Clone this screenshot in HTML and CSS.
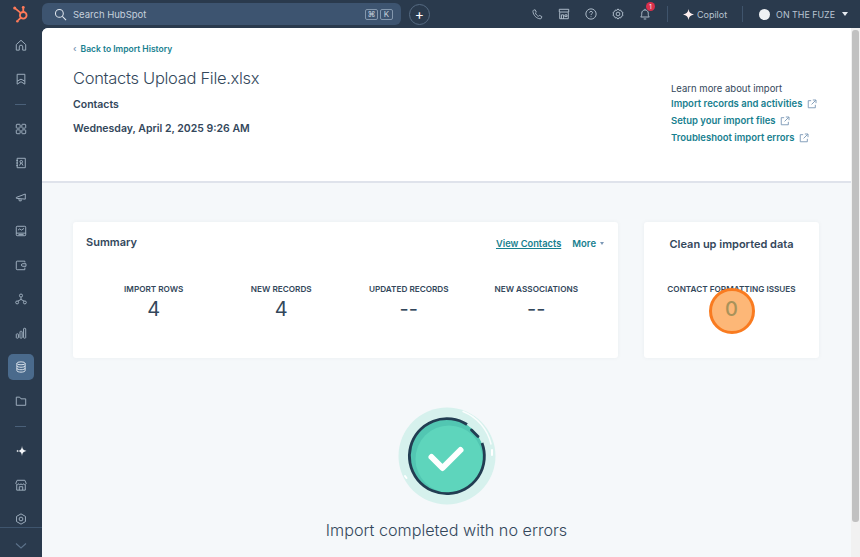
FILE: index.html
```html
<!DOCTYPE html>
<html lang="en">
<head>
<meta charset="utf-8">
<title>Import summary</title>
<link rel="stylesheet" href="styles.css">
</head>
<body>
<header class="topbar">
  <div class="logo">
    <svg viewBox="0 0 20 20" width="18" height="18"><g fill="none" stroke="#ff7a59" stroke-width="2"><circle cx="12.5" cy="11.5" r="3.7"/><path d="M12.5 7.5V3.5M9.6 8.7 3.5 3.8M9.7 14.2l-3 3"/></g><circle cx="12.5" cy="2.8" r="1.6" fill="#ff7a59"/><circle cx="3" cy="3.3" r="1.7" fill="#ff7a59"/><circle cx="6" cy="18" r="1.4" fill="#ff7a59"/></svg>
  </div>
  <div class="search">
    <svg class="search-icon" viewBox="0 0 14 14" width="13" height="13"><circle cx="5.8" cy="5.8" r="4.2"/><path d="m9 9 4 4"/></svg>
    <span class="search-text">Search HubSpot</span>
    <span class="key">⌘</span><span class="key">K</span>
  </div>
  <button class="plus">+</button>
  <div class="spacer"></div>
  <div class="tool"><svg viewBox="0 0 14 14" width="11" height="11"><path d="M2 1.5 4 1l1.500 3-1.200 1c.6 1.800 2.200 3.500 4 4.300l1.200-1.200 3 1.500-.5 2c-.3.800-1 1-1.800.9C5.500 12 1.800 8 1.200 3.300 1.100 2.500 1.300 1.800 2 1.500Z"/></svg></div>
  <div class="tool"><svg viewBox="0 0 14 14" width="12" height="12"><path d="M2 5v7.500h10V5M1.500 1.500h11v3.200h-11ZM4 12.500V8h2.500v4.500M8 8h2.500v2H8Z"/></svg></div>
  <div class="tool"><svg viewBox="0 0 14 14" width="12" height="12"><circle cx="7" cy="7" r="6"/><path d="M5.300 5.400C5.400 3.400 8.800 3.500 8.800 5.400c0 1.300-1.800 1.400-1.800 2.800M7 9.700v1"/></svg></div>
  <div class="tool"><svg viewBox="0 0 14 14" width="12" height="12"><path d="m7 1 1.200 1.700 2-.3.800 1.900 1.800.9-.6 1.800.6 1.800-1.800.9-.8 1.900-2-.3L7 13l-1.200-1.700-2 .3-.8-1.900-1.800-.9L1.800 7l-.6-1.800L3 4.300l.8-1.900 2 .3Z"/><circle cx="7" cy="7" r="2.200"/></svg></div>
  <div class="tool bell"><svg viewBox="0 0 14 14" width="12" height="12"><path d="M2 10.500c1.200-1 1.200-2.500 1.200-4.500C3.200 3.800 5 2.300 7 2.300s3.800 1.500 3.800 3.700c0 2 0 3.500 1.200 4.500ZM5.500 12.800h3M7 1v1.200"/></svg><span class="badge">1</span></div>
  <span class="bar-divider first"></span>
  <div class="copilot">
    <svg viewBox="0 0 12 12" width="11" height="11"><path class="solid" d="M6 0c.5 3.500 2.200 5.400 6 6-3.800.6-5.500 2.500-6 6-.5-3.500-2.200-5.400-6-6 3.800-.6 5.500-2.500 6-6Z"/></svg>
    <span>Copilot</span>
  </div>
  <span class="bar-divider"></span>
  <div class="account">
    <span class="avatar"></span>
    <span>ON THE FUZE</span>
    <span class="caret"></span>
  </div>
</header>
<div class="shell">
  <nav class="sidebar">
    <div class="nav-items">
      <a class="nav"><svg viewBox="0 0 14 14"><path d="M1.500 6.500 7 1.500l5.500 5v6.500H9V9.200a2 2 0 0 0-4 0V13H1.500Z"/></svg></a>
      <a class="nav"><svg viewBox="0 0 14 14"><path d="M2.500 1.500h9V13L7 10.200 2.500 13ZM2.500 9.500 7 7.200l4.500 2.300"/></svg></a>
      <span class="nav-divider"></span>
      <a class="nav"><svg viewBox="0 0 14 14"><rect x="1.500" y="1.500" width="4.500" height="4.500" rx=".8"/><rect x="8" y="1.500" width="4.500" height="4.500" rx=".8"/><rect x="1.500" y="8" width="4.500" height="4.500" rx=".8"/><rect x="8" y="8" width="4.500" height="4.500" rx=".8"/></svg></a>
      <a class="nav"><svg viewBox="0 0 14 14"><path d="M2.500 1.500h9.500v11H2.500ZM1.500 4h2M1.500 7h2M1.500 10h2"/><circle cx="7.300" cy="5.500" r="1.500"/><path d="m5.300 10 1.500-3M9.300 10l-1.500-3"/></svg></a>
      <a class="nav"><svg viewBox="0 0 14 14"><path d="M1.500 7.500 12 3.500v6L1.500 8.500ZM4.500 9l.5 2.500h2.300L7 9.500"/></svg></a>
      <a class="nav"><svg viewBox="0 0 14 14"><rect x="1.500" y="1.500" width="11" height="11" rx="1"/><path d="M1.500 9.500h11M4 11.200h6M3.500 6l2-1.500 2 1.500 3-2"/></svg></a>
      <a class="nav"><svg viewBox="0 0 14 14"><path d="M11.500 4V2.500h-9a1 1 0 0 0-1 1v8a1 1 0 0 0 1 1h9V10"/><path d="M9 5.500h3.800v3H9a1.500 1.500 0 0 1 0-3Z"/></svg></a>
      <a class="nav"><svg viewBox="0 0 14 14"><circle cx="7" cy="3" r="1.800"/><circle cx="2.500" cy="11" r="1.700"/><circle cx="11.500" cy="11" r="1.700"/><path d="M7 5v2.500M3.300 9.500 7 7.500l3.700 2"/></svg></a>
      <a class="nav"><svg viewBox="0 0 14 14"><rect x="1.500" y="8" width="2.500" height="5" rx=".8"/><rect x="5.800" y="5" width="2.500" height="8" rx=".8"/><rect x="10" y="1.500" width="2.500" height="11.500" rx=".8"/></svg></a>
      <a class="nav active"><svg viewBox="0 0 14 14"><ellipse cx="7" cy="2.700" rx="4.800" ry="1.700"/><path d="M2.200 2.700v8.600c0 .9 2.200 1.700 4.800 1.700s4.800-.8 4.800-1.700V2.700M2.200 5.600c0 .9 2.200 1.700 4.800 1.700s4.800-.8 4.800-1.700M2.200 8.500c0 .9 2.200 1.700 4.800 1.700s4.800-.8 4.800-1.700"/></svg></a>
      <a class="nav"><svg viewBox="0 0 14 14"><path d="M1.500 2.500h4l1.500 2h5.500v7.500h-11Z"/></svg></a>
      <span class="nav-divider"></span>
      <a class="nav bright"><svg viewBox="0 0 14 14"><path class="solid" d="M8.200 1c.3 3.500 1.300 5.300 5.300 6-4 .7-5 2.500-5.300 6-.3-3.500-1.300-5.300-4.200-6 2.900-.7 3.900-2.500 4.200-6ZM3 5.500c.1 .8.600 1.300 1.500 1.500-.9.200-1.400.7-1.500 1.500-.1-.8-.6-1.300-1.500-1.500.9-.2 1.400-.7 1.500-1.500Z"/></svg></a>
      <a class="nav"><svg viewBox="0 0 14 14"><path d="M2.500 1.500h9l1.500 3.500c0 2-3 2-3 .5 0 1.500-3 1.500-3 0 0 1.500-3 1.500-3 0 0 1.500-3 1.500-3-.5ZM2 7v6h10V7M5 13V9h4v4"/></svg></a>
      <a class="nav"><svg viewBox="0 0 14 14"><path d="m7 1 5.200 3v6L7 13l-5.200-3V4Z"/><circle cx="7" cy="7" r="2.200"/></svg></a>
    </div>
    <div class="nav-foot"><svg viewBox="0 0 12 6" width="12" height="6"><path d="m1 .5 5 4.500 5-4.500"/></svg></div>
  </nav>
  <main class="main">
    <section class="head">
      <div class="head-left">
        <a class="back"><span class="chev">‹</span>Back to Import History</a>
        <h1>Contacts Upload File.xlsx</h1>
        <div class="sub">Contacts</div>
        <div class="sub date">Wednesday, April 2, 2025 9:26 AM</div>
      </div>
      <div class="head-right">
        <div class="learn">Learn more about import</div>
        <a class="ext">Import records and activities <svg viewBox="0 0 12 12" width="10" height="10"><path d="M5 2H1.500v8.500H10V7M7 1.200h3.800V5M10.500 1.500 5.500 6.500"/></svg></a>
        <a class="ext">Setup your import files <svg viewBox="0 0 12 12" width="10" height="10"><path d="M5 2H1.500v8.500H10V7M7 1.200h3.800V5M10.500 1.500 5.500 6.500"/></svg></a>
        <a class="ext">Troubleshoot import errors <svg viewBox="0 0 12 12" width="10" height="10"><path d="M5 2H1.500v8.500H10V7M7 1.200h3.800V5M10.500 1.500 5.500 6.500"/></svg></a>
      </div>
    </section>
    <section class="cards">
      <div class="card summary">
        <div class="card-head">
          <h2>Summary</h2>
          <a class="view">View Contacts</a>
          <a class="more">More<span class="more-caret"></span></a>
        </div>
        <div class="stats">
          <div class="stat"><div class="label">IMPORT ROWS</div><div class="value">4</div></div>
          <div class="stat"><div class="label">NEW RECORDS</div><div class="value">4</div></div>
          <div class="stat"><div class="label">UPDATED RECORDS</div><div class="value">--</div></div>
          <div class="stat"><div class="label">NEW ASSOCIATIONS</div><div class="value">--</div></div>
        </div>
      </div>
      <div class="card cleanup">
        <h2>Clean up imported data</h2>
        <div class="stat">
          <div class="label">CONTACT FORMATTING ISSUES</div>
          <div class="value zero">0<span class="spot"></span></div>
        </div>
      </div>
    </section>
    <section class="done">
      <svg class="done-art" viewBox="0 0 100 100" width="100" height="100">
        <circle cx="50" cy="50" r="48.500" fill="#d6f1ed"/>
        <path d="M66 5.500A46 46 0 0 1 94 38" fill="none" stroke="#fff" stroke-width="1.500" stroke-linecap="round" opacity=".85"/>
        <path d="M95 44v5M8 70l1.500 2" fill="none" stroke="#fff" stroke-width="2" stroke-linecap="round"/>
        <circle cx="50" cy="50" r="37" fill="#52c6b2"/>
        <circle cx="52" cy="53" r="33.500" fill="#5ed5bc"/>
        <path d="M70 18.500A37.500 37.500 0 1 0 85 37" fill="none" stroke="#223d52" stroke-width="2.800"/>
        <path d="M74.500 24 81 30.500" fill="none" stroke="#223d52" stroke-width="2.800" stroke-linecap="round"/>
        <path d="m34.500 51 11 11 18-18" fill="none" stroke="#fff" stroke-width="6" stroke-linecap="round" stroke-linejoin="round"/>
      </svg>
      <p>Import completed with no errors</p>
    </section>
  </main>
  <div class="scrollbar"><span class="thumb"></span></div>
</div>
</body>
</html>
```

FILE: styles.css
```css
* { box-sizing: border-box; }
html, body { margin: 0; height: 100%; overflow: hidden; }
body {
  font-family: Inter, "Noto Sans", sans-serif;
  color: #33475b;
  background: #2a3a4d;
  display: flex;
  flex-direction: column;
}
svg { fill: none; stroke: currentColor; stroke-width: 1.100; }
svg .solid { fill: currentColor; stroke: none; }
h1, h2, p { margin: 0; font-weight: 400; }

.topbar {
  flex: 0 0 28px;
  display: flex;
  align-items: center;
  padding-right: 12px;
  color: #cfd8e3;
  font-size: 9.500px;
}
.logo { width: 42px; display: flex; justify-content: center; }
.logo svg { stroke: none; }
.search {
  width: 359px;
  height: 22px;
  background: #3d5470;
  border-radius: 6px;
  display: flex;
  align-items: center;
  padding: 0 8px 0 12px;
  gap: 2px;
  color: #c6d1dd;
}
.search-icon { color: #e3e9f0; margin-right: 4px; }
.search-text { flex: 1; font-size: 9.500px; }
.key {
  width: 13px;
  height: 11px;
  border: 1px solid #8397ad;
  border-radius: 2px;
  font-size: 8px;
  line-height: 9px;
  text-align: center;
}
.plus {
  width: 21px;
  height: 21px;
  margin-left: 8px;
  border: 1px solid #566b83;
  border-radius: 50%;
  background: none;
  color: #fff;
  font: 14px/15px Inter, sans-serif;
  padding: 0 0 2px;
}
.spacer { flex: 1; }
.tool { width: 27px; display: flex; justify-content: center; position: relative; color: #b4c1cf; }
.badge {
  position: absolute;
  top: -6px;
  left: 14px;
  width: 9px;
  height: 9px;
  border-radius: 50%;
  background: #d9304c;
  color: #fff;
  font-size: 6px;
  line-height: 9px;
  text-align: center;
}
.bar-divider { width: 1px; height: 16px; background: #3f546c; margin-left: 15px; }
.bar-divider.first { margin-left: 8px; }
.copilot { display: flex; align-items: center; gap: 3px; margin-left: 15px; font-size: 9px; color: #b9c5d2; }
.copilot svg { color: #fdeeee; }
.account { display: flex; align-items: center; margin-left: 16px; font-size: 8.900px; color: #b9c5d2; }
.avatar { width: 11px; height: 11px; border-radius: 50%; background: #eef1f4; margin-right: 6px; }
.caret {
  margin-left: 7px;
  border: 3.500px solid transparent;
  border-top: 4px solid #e6ebf1;
  border-bottom: 0;
}

.shell { flex: 1; display: flex; min-height: 0; }
.sidebar { width: 42px; display: flex; flex-direction: column; color: #a3b2c2; }
.nav-items { flex: 1; min-height: 0; overflow: hidden; display: flex; flex-direction: column; }
.nav { flex: 0 0 34px; display: flex; align-items: center; justify-content: center; }
.nav svg { width: 12px; height: 12px; }
.nav.active { background: #4a6a8c; border-radius: 5px; margin: 4px 8px 4px 8px; flex-basis: 26px; color: #dfe7ef; }
.nav.bright { color: #f4f6f9; }
.nav-divider { flex: 0 0 16px; position: relative; }
.nav-divider::after { content: ""; position: absolute; left: 15px; right: 16px; top: 8px; height: 1px; background: #4a6079; }
.nav-foot { flex: 0 0 30px; border-top: 1px solid #3f556e; display: flex; align-items: center; justify-content: center; padding-top: 7px; color: #5c728a; }

.main { flex: 1; min-width: 0; background: #f5f8fa; border-top-left-radius: 6px; overflow: hidden; }
.head {
  height: 155px;
  background: #fff;
  border-bottom: 2px solid #dfe3eb;
  display: flex;
  justify-content: space-between;
  padding: 15px 34px 0 31px;
}
.back { display: block; color: #17808f; font-size: 8.500px; font-weight: 600; line-height: 12px; }
.chev { color: #7c98b6; margin-right: 4px; }
h1 { font-size: 16.500px; letter-spacing: -.3px; font-weight: 300; line-height: 24px; margin-top: 11px; }
.sub { font-size: 10.500px; font-weight: 600; line-height: 14px; margin-top: 8px; }
.sub.date { margin-top: 10px; }
.head-right { width: 146px; padding-top: 39px; }
.learn { font-size: 9.500px; line-height: 13px; margin-bottom: -2px; }
.ext { display: block; color: #17808f; font-size: 9.500px; font-weight: 600; line-height: 13px; margin-top: 4px; white-space: nowrap; }
.ext svg { color: #7c98b6; vertical-align: -1.500px; margin-left: 2px; }

.cards { display: flex; gap: 26px; padding: 39px 32px 0 31px; }
.card { background: #fff; border-radius: 3px; height: 136px; box-shadow: 0 0 4px rgba(45, 62, 80, .05); }
.summary { width: 545px; padding: 13px 14px 0 13px; }
.card-head { display: flex; align-items: center; height: 14px; }
h2 { font-size: 11px; font-weight: 600; line-height: 14px; }
.card-head h2 { flex: 1; }
.view { color: #17808f; font-size: 9.300px; font-weight: 600; text-decoration: underline; margin-top: 2px; }
.more { color: #17808f; font-size: 9.500px; font-weight: 600; margin-left: 11px; margin-top: 2px; }
.more-caret { display: inline-block; margin-left: 4px; vertical-align: 2px; border: 2.500px solid transparent; border-top: 3px solid #7c98b6; border-bottom: 0; }
.stats { display: flex; margin: 34px 0 0 4px; }
.stats .stat { width: 127.500px; }
.stat { text-align: center; }
.label { font-size: 8.200px; font-weight: 600; line-height: 12px; white-space: nowrap; }
.value { font-size: 20px; font-weight: 400; line-height: 24px; margin-top: 2px; }
.cleanup { width: 175px; padding-top: 15px; text-align: center; }
.cleanup .stat { margin-top: 32px; }
.zero { position: relative; color: #a8925a; font-weight: 500; z-index: 1; isolation: isolate; }
.spot {
  position: absolute;
  left: 64.500px;
  top: -9px;
  width: 46px;
  height: 46px;
  border: 3px solid #f97b20;
  border-radius: 50%;
  background: #fdb777;
  z-index: -1;
}

.done { display: flex; flex-direction: column; align-items: center; margin-top: 48px; }
.done-art { stroke: none; }
p { font-size: 16.200px; font-weight: 300; line-height: 22px; margin-top: 13px; }

.scrollbar { width: 9px; background: #f1f1f1; padding-top: 2px; }
.thumb { display: block; width: 7px; margin-left: 1px; height: 492px; border-radius: 3px; background: #c1c1c1; }
```
